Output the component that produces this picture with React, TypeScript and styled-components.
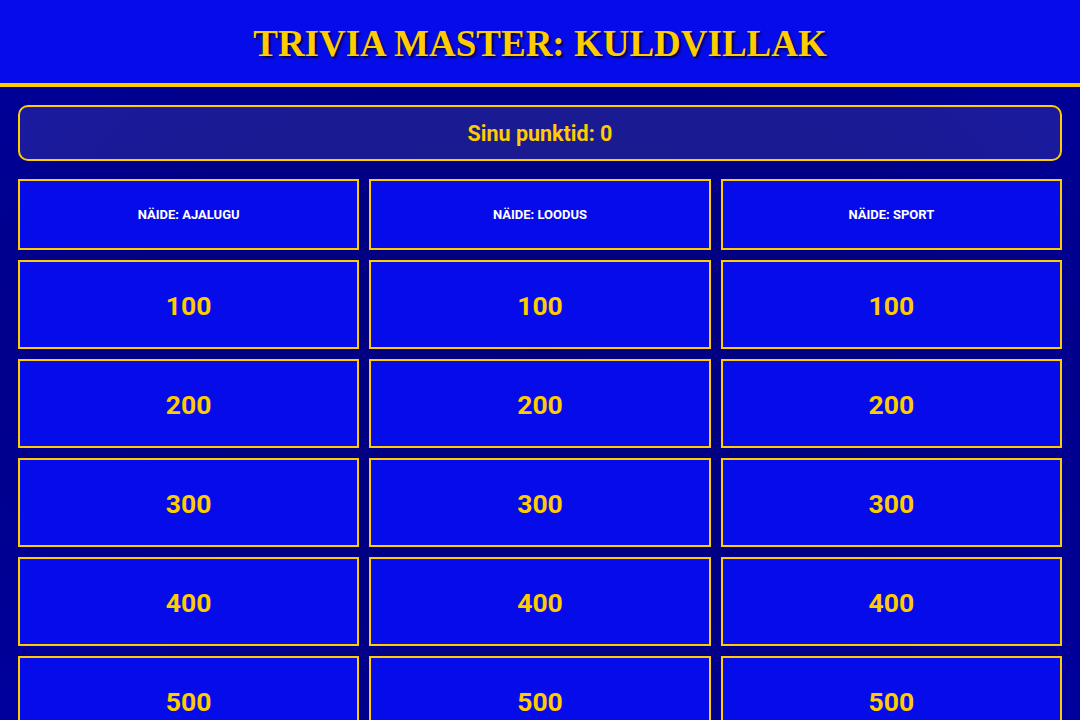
import React, { useState } from "react";
import styled, { createGlobalStyle } from "styled-components";

const GlobalStyle = createGlobalStyle`
  html, body {
    margin: 0;
    padding: 0;
  }
  body {
    background: radial-gradient(ellipse at center, #00007f 0%, #000088 60%, #00009e 100%);
    background-attachment: fixed;
    font-family: Roboto, "Liberation Sans", sans-serif;
    min-height: 100vh;
  }
`;

const categories = ["Näide: Ajalugu", "Näide: Loodus", "Näide: Sport"];
const values = [100, 200, 300, 400, 500];

const App = () => {
  const [score] = useState(0);

  return (
    <>
      <GlobalStyle />
      <Header>
        <Title>Trivia Master: Kuldvillak</Title>
      </Header>
      <Main>
        <ScoreBox>Sinu punktid: {score}</ScoreBox>
        <Board>
          {categories.map((cat) => (
            <CategoryCell key={cat}>{cat}</CategoryCell>
          ))}
          {values.map((value) =>
            categories.map((cat) => (
              <ValueCell key={cat + value}>{value}</ValueCell>
            ))
          )}
        </Board>
      </Main>
    </>
  );
};

const Header = styled.header`
  height: 87px;
  box-sizing: border-box;
  padding-top: 4px;
  background: #060ce9;
  border-bottom: 4px solid #ffcc00;
  display: flex;
  align-items: center;
  justify-content: center;
`;

const Title = styled.h1`
  margin: 0;
  font-family: "Liberation Serif", "DejaVu Serif", serif;
  font-weight: 700;
  font-size: 37px;
  text-transform: uppercase;
  color: #ffcc00;
  text-shadow: 2px 2px 2px rgba(0, 0, 40, 0.8);
`;

const Main = styled.main`
  padding: 18px;
`;

const ScoreBox = styled.div`
  height: 56px;
  box-sizing: border-box;
  border: 2px solid #ffcc00;
  border-radius: 10px;
  background: rgba(255, 255, 255, 0.1);
  color: #ffcc00;
  font-weight: 700;
  font-size: 21.5px;
  display: flex;
  align-items: center;
  justify-content: center;
  margin-bottom: 18px;
`;

const Board = styled.div`
  display: grid;
  grid-template-columns: repeat(3, 1fr);
  grid-template-rows: 71px;
  grid-auto-rows: 89px;
  gap: 10px;
`;

const Cell = styled.div`
  box-sizing: border-box;
  border: 2px solid #ffcc00;
  background: #060ce9;
  display: flex;
  align-items: center;
  justify-content: center;
  font-weight: 700;
`;

const CategoryCell = styled(Cell)`
  color: #ffffff;
  font-size: 13px;
  text-transform: uppercase;
`;

const ValueCell = styled(Cell)`
  color: #ffcc00;
  font-size: 26.5px;
  padding-top: 2px;
  cursor: pointer;
`;

export default App;
